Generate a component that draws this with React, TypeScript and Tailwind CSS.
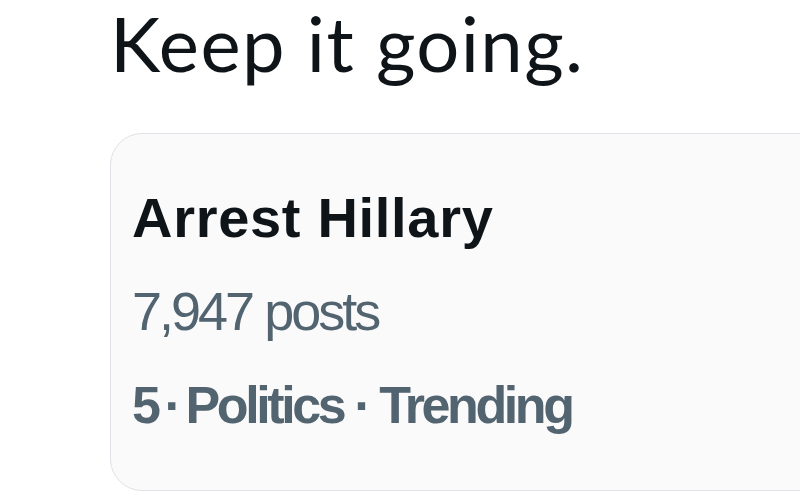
import React from "react";

export default function App() {
  return (
    <div className="w-[800px] h-[492px] overflow-hidden bg-white pl-[110px]">
      <h1
        className="text-[76px] leading-[86px] tracking-[1.4px] text-[#0f1419] font-normal whitespace-nowrap"
        style={{ fontFamily: "Lato, sans-serif" }}
      >
        Keep it going.
      </h1>
      <div
        className="mt-[47px] w-[760px] h-[358px] rounded-[32px] border border-[#dfe2e6] bg-[#fafafa] pl-[21px] pt-[56px] flex flex-col"
        style={{ fontFamily: '"Liberation Sans", Arial, sans-serif' }}
      >
        <div className="text-[56px] leading-[56px] font-bold text-[#0f1419] tracking-[0.7px] whitespace-nowrap">
          Arrest Hillary
        </div>
        <div className="mt-[38px] text-[54px] leading-[54px] text-[#536471] tracking-[-3px] whitespace-nowrap">
          7,947 posts
        </div>
        <div className="mt-[41px] text-[52px] leading-[53px] font-bold text-[#536471] tracking-[-3.4px] whitespace-nowrap">
          5{"\u2009"}·{"\u2009"}Politics · Trending
        </div>
      </div>
    </div>
  );
}
